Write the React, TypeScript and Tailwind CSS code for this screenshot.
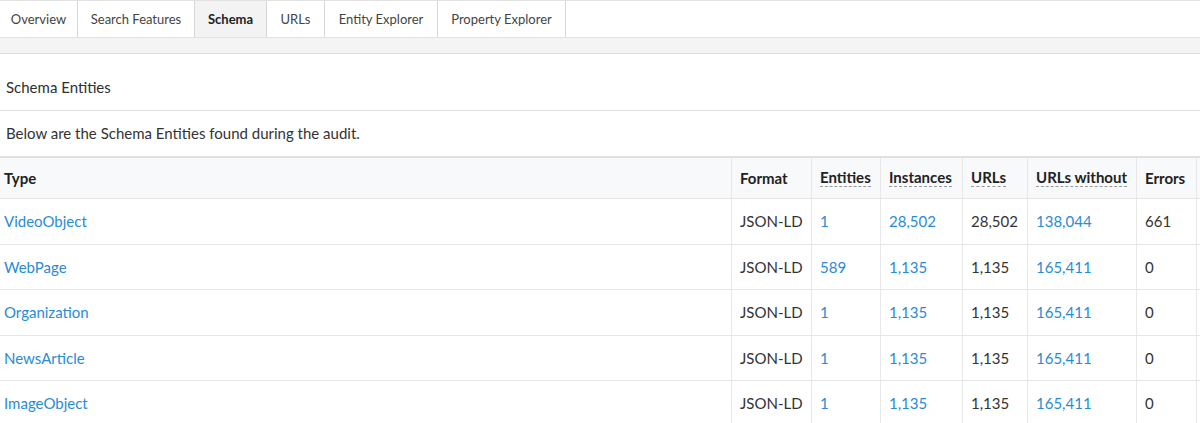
import React from "react";

const tabs = [
  { label: "Overview", w: "w-[78px]" },
  { label: "Search Features", w: "w-[117px]" },
  { label: "Schema", w: "w-[72px]", active: true },
  { label: "URLs", w: "w-[58px]" },
  { label: "Entity Explorer", w: "w-[113px]" },
  { label: "Property Explorer", w: "w-[128px]" },
];

const rows = [
  { type: "VideoObject", entities: "1", instances: "28,502", urls: "28,502", without: "138,044", errors: "661" },
  { type: "WebPage", entities: "589", instances: "1,135", urls: "1,135", without: "165,411", errors: "0" },
  { type: "Organization", entities: "1", instances: "1,135", urls: "1,135", without: "165,411", errors: "0" },
  { type: "NewsArticle", entities: "1", instances: "1,135", urls: "1,135", without: "165,411", errors: "0" },
  { type: "ImageObject", entities: "1", instances: "1,135", urls: "1,135", without: "165,411", errors: "0" },
];

const link = "text-[#2a8bd5]";

function Abbr({ children }: { children: React.ReactNode }) {
  return <span className="border-b border-dashed border-[#9a9a9a] leading-[17px]">{children}</span>;
}

export default function App() {
  return (
    <div className="font-['Lato','Open_Sans',sans-serif] bg-white w-[1200px] h-[423px] overflow-hidden text-[#333]">
      <div className="flex h-[38px] border-t border-b border-[#e2e2e2]">
        {tabs.map((t) => (
          <div
            key={t.label}
            className={`${t.w} flex items-center justify-center pt-[1px] border-r border-[#d6d6d6] text-[13px] ${
              t.active ? "bg-[#f3f3f3] font-bold text-[#222]" : "text-[#444]"
            }`}
          >
            {t.label}
          </div>
        ))}
      </div>
      <div className="h-[16px] bg-[#f4f4f4] border-b border-[#dcdcdc]" />
      <div className="h-[57px] flex items-end pb-[13px] pl-[6px] text-[15px] leading-[20px] text-[#2f2f2f] border-b border-[#e2e2e2]">
        Schema Entities
      </div>
      <div className="h-[45px] flex items-center pl-[6px] text-[15px]">
        Below are the Schema Entities found during the audit.
      </div>
      <div className="border-t-2 border-[#e0e0e0]">
        <div className="flex h-[41px] bg-[#f8f9fa] border-b border-[#e6e6e6] font-bold text-[15px] text-[#222]">
          <div className="w-[731px] flex items-center pl-[4px]">Type</div>
          <div className="w-[80px] flex items-center pl-[8px] border-l border-[#e8e8e8]">Format</div>
          <div className="w-[69px] flex items-center pl-[8px] border-l border-[#e8e8e8]"><Abbr>Entities</Abbr></div>
          <div className="w-[82px] flex items-center pl-[8px] border-l border-[#e8e8e8]"><Abbr>Instances</Abbr></div>
          <div className="w-[65px] flex items-center pl-[8px] border-l border-[#e8e8e8]"><Abbr>URLs</Abbr></div>
          <div className="w-[109px] flex items-center pl-[8px] border-l border-[#e8e8e8]"><Abbr>URLs without</Abbr></div>
          <div className="w-[60px] flex items-center pl-[8px] border-l border-[#e8e8e8]">Errors</div>
          <div className="flex-1 border-l border-[#e8e8e8]" />
        </div>
        {rows.map((r) => (
          <div key={r.type} className="flex h-[45.5px] border-b border-[#e6e6e6] text-[15px]">
            <div className={`w-[731px] flex items-center pl-[4px] ${link}`}>{r.type}</div>
            <div className="w-[80px] flex items-center pl-[8px] border-l border-[#e8e8e8]">JSON-LD</div>
            <div className={`w-[69px] flex items-center pl-[8px] border-l border-[#e8e8e8] ${link}`}>{r.entities}</div>
            <div className={`w-[82px] flex items-center pl-[8px] border-l border-[#e8e8e8] ${link}`}>{r.instances}</div>
            <div className="w-[65px] flex items-center pl-[8px] border-l border-[#e8e8e8]">{r.urls}</div>
            <div className={`w-[109px] flex items-center pl-[8px] border-l border-[#e8e8e8] ${link}`}>{r.without}</div>
            <div className="w-[60px] flex items-center pl-[8px] border-l border-[#e8e8e8]">{r.errors}</div>
            <div className="flex-1 border-l border-[#e8e8e8]" />
          </div>
        ))}
      </div>
    </div>
  );
}
